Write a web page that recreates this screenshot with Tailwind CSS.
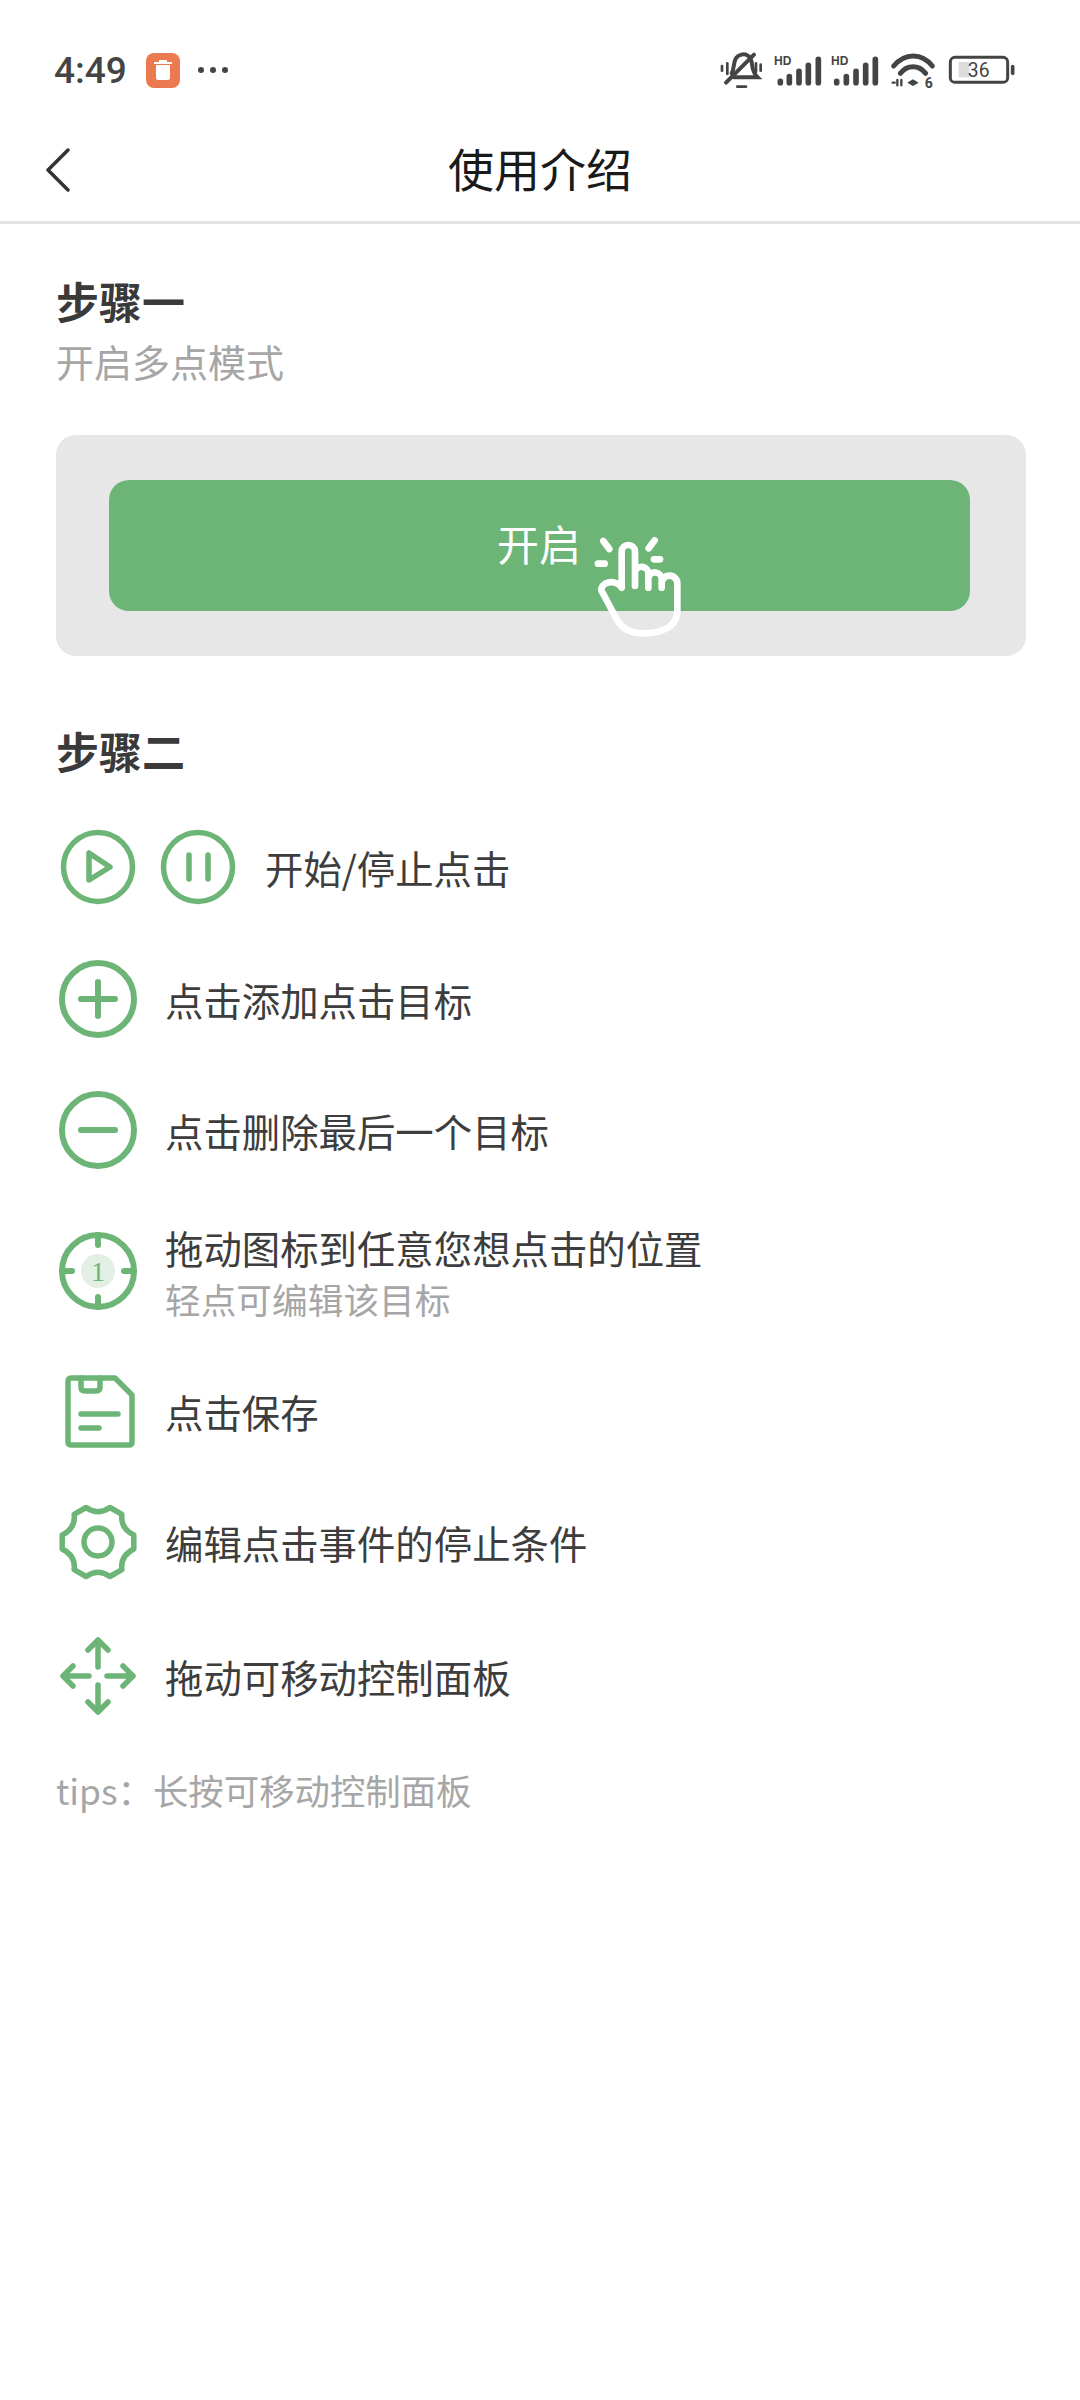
<!DOCTYPE html>
<html lang="zh">
<head>
  <meta charset="UTF-8">
  <meta name="viewport" content="width=device-width, initial-scale=1.0">
  <title>使用介绍</title>
  <script src="https://cdn.jsdelivr.net/npm/@tailwindcss/browser@4"></script>
</head>
<body class="bg-white font-['Noto_Sans_CJK_SC','Noto_Sans',sans-serif]">
  <div class="relative w-[1080px] h-[2400px] overflow-hidden">

    <!-- status bar -->
    <div class="relative h-[112px] pt-[28px] pl-[54px] flex items-center text-[#444]">
      <span class="font-['Roboto',sans-serif] text-[37px] leading-none font-medium">4:49</span>
      <svg class="ml-[19px]" width="34" height="35" viewBox="0 0 34 35">
        <rect width="34" height="35" rx="8" fill="#ec7a50"/>
        <path d="M10 12h14v13a2 2 0 0 1-2 2h-10a2 2 0 0 1-2-2z" fill="#fff"/>
        <rect x="8" y="9" width="18" height="2" fill="#fff"/>
        <rect x="13" y="7" width="8" height="2" fill="#fff"/>
      </svg>
      <div class="ml-[18px] flex gap-[6px]">
        <span class="w-[6px] h-[6px] rounded-full bg-[#444]"></span>
        <span class="w-[6px] h-[6px] rounded-full bg-[#444]"></span>
        <span class="w-[6px] h-[6px] rounded-full bg-[#444]"></span>
      </div>
      <svg class="absolute left-[690px] top-[30px]" width="340" height="80" viewBox="0 0 1020 240" fill="none" stroke="#444" stroke-linecap="round">
        <!-- muted bell -->
        <path d="M125 130c8-12 4-30 12-44 8-13 26-17 38-8 12 8 10 26 14 40 2 10 8 18 14 24h-72" stroke-width="12"/>
        <path d="M108 158 192 74" stroke-width="12"/>
        <path d="M142 170h26" stroke-width="8"/>
        <path d="M96 108v14M112 100v32M198 100v26M212 104v18" stroke-width="8"/>
        <!-- signal 1 -->
        <text x="252" y="106" font-family="Liberation Sans" font-weight="700" font-size="36" fill="#444" stroke="none">HD</text>
        <path d="M271 158v-4M298 158v-18M327 158v-34M355 158v-52M385 158v-70" stroke-width="17"/>
        <!-- signal 2 -->
        <text x="423" y="106" font-family="Liberation Sans" font-weight="700" font-size="36" fill="#444" stroke="none">HD</text>
        <path d="M440 158v-4M469 158v-18M498 158v-34M527 158v-52M556 158v-70" stroke-width="17"/>
        <!-- wifi -->
        <path d="M611 108C645 68 695 68 727 108" stroke-width="15"/>
        <path d="M631 130C652 104 686 104 707 130" stroke-width="15"/>
        <path d="M656 158l13-8 13 8-13 8z" fill="#444" stroke-width="4"/>
        <path d="M608 158h6M622 150v16M634 150v16" stroke-width="7"/>
        <text x="704" y="174" font-family="Roboto" font-weight="700" font-size="42" fill="#444" stroke="none">6</text>
        <!-- battery -->
        <rect x="806" y="96" width="32" height="46" fill="#dcdcdc" stroke="none"/>
        <rect x="781" y="82" width="172" height="75" rx="14" stroke-width="9"/>
        <path d="M968 110v20" stroke-width="11"/>
        <text x="866" y="141" text-anchor="middle" font-family="Roboto" font-size="58" fill="#444" stroke="none">36</text>
      </svg>
    </div>

    <!-- nav -->
    <div class="relative h-[112px] border-b-[3px] border-[#e3e3e3] flex items-center justify-center">
      <svg class="absolute left-[44px] top-[34px]" width="30" height="46" viewBox="0 0 30 46" fill="none" stroke="#333" stroke-width="3.5" stroke-linecap="round" stroke-linejoin="round">
        <path d="M24 4 4 24 24 44"/>
      </svg>
      <h1 class="text-[46px] leading-none text-[#1a1a1a] font-normal">使用介绍</h1>
    </div>

    <!-- step 1 -->
    <div class="px-[56px] pt-[46px]">
      <h2 class="text-[43px] leading-[60px] font-bold text-[#3a3a3a]">步骤一</h2>
      <p class="mt-[6px] text-[38px] leading-[50px] text-[#a6a6a6]">开启多点模式</p>
      <div class="mt-[49px] w-[970px] h-[221px] rounded-[20px] bg-[#e7e7e7] pt-[45px] pl-[53px]">
        <div class="relative w-[861px] h-[131px] rounded-[20px] bg-[#6cb576] flex items-center text-white text-[42px] pl-[388px] pb-[6px]">
          开启
          <svg class="absolute left-[331px] top-[-9px]" width="280" height="190" viewBox="0 0 840 570" fill="none" stroke="#fff" stroke-width="20" stroke-linecap="round" stroke-linejoin="round">
            <path d="M490 210 508 234M474 278H494M644 208 626 232M642 265H660"/>
            <path d="M545 345V242a20 20 0 0 1 40 0V345M585 305a20 20 0 0 1 40 5V350M625 322a20 20 0 0 1 40 5V350M665 335a22 22 0 0 1 47 5V420C712 470 660 487 610 487 570 487 540 470 525 435L485 360C478 335 525 320 545 350"/>
          </svg>
        </div>
      </div>

      <!-- step 2 -->
      <h2 class="mt-[64px] text-[43px] leading-[60px] font-bold text-[#3a3a3a]">步骤二</h2>

      <div class="text-[38.4px] text-[#3d3d3d] leading-[52px]">
        <div class="mt-[42px] h-[90px] flex items-center">
          <svg class="shrink-0" width="184" height="90" viewBox="0 0 184 90" fill="none" stroke="#6cb576" stroke-width="5.5" stroke-linecap="round" stroke-linejoin="round">
            <circle cx="42" cy="45" r="34.5"/>
            <path d="M33 31V58L54 45Z"/>
            <circle cx="142" cy="45" r="34.5"/>
            <path d="M133 33V57M152 33V57"/>
          </svg>
          <span class="ml-[25px]">开始/停止点击</span>
        </div>
        <div class="mt-[42px] h-[90px] flex items-center">
          <svg width="84" height="90" viewBox="0 0 84 90" fill="none" stroke="#6cb576" stroke-width="6" stroke-linecap="round">
            <circle cx="42" cy="45" r="36"/>
            <path d="M42 28V62M25 45H59"/>
          </svg>
          <span class="ml-[25px]">点击添加点击目标</span>
        </div>
        <div class="mt-[41px] h-[90px] flex items-center">
          <svg width="84" height="90" viewBox="0 0 84 90" fill="none" stroke="#6cb576" stroke-width="6" stroke-linecap="round">
            <circle cx="42" cy="45" r="36"/>
            <path d="M25 45H59"/>
          </svg>
          <span class="ml-[25px]">点击删除最后一个目标</span>
        </div>
        <div class="mt-[42px] h-[108px] flex items-center">
          <svg width="84" height="90" viewBox="0 0 84 90" fill="none" stroke="#6cb576" stroke-width="6" stroke-linecap="round">
            <circle cx="42" cy="45" r="17" fill="#e3efe4" stroke="none"/>
            <circle cx="42" cy="45" r="36"/>
            <path d="M42 9V19M42 71V81M6 45H16M68 45H78"/>
            <text x="42" y="55" text-anchor="middle" font-family="Liberation Serif" font-size="28" fill="#6cb576" stroke="none">1</text>
          </svg>
          <div class="ml-[25px]">
            <p class="leading-[56px]">拖动图标到任意您想点击的位置</p>
            <p class="text-[35.7px] leading-[48px] text-[#a6a6a6]">轻点可编辑该目标</p>
          </div>
        </div>
        <div class="mt-[41px] h-[90px] flex items-center">
          <svg width="84" height="90" viewBox="0 0 84 90" fill="none" stroke="#6cb576" stroke-width="5.5" stroke-linecap="round" stroke-linejoin="round">
            <path d="M16 12H59L76 29V76Q76 79 73 79H16Q12 79 12 76V15Q12 12 16 12Z"/>
            <path d="M25 12V21Q25 25 29 25H40Q44 25 44 21V12"/>
            <path d="M25 48H62M25 62H43"/>
          </svg>
          <span class="ml-[25px]">点击保存</span>
        </div>
        <div class="mt-[41px] h-[90px] flex items-center">
          <svg width="84" height="90" viewBox="0 0 84 90" fill="none" stroke="#6cb576" stroke-width="5.5" stroke-linecap="round" stroke-linejoin="round">
            <circle cx="42" cy="45" r="14"/>
            <path d="M77.8 38V52Q64 59 65.9 72.6L53.9 79.5Q42 71 30.1 79.5L18.1 72.6Q20 59 6.2 52V38Q20 31 18.1 17.4L30.1 10.5Q42 19 53.9 10.5L65.9 17.4Q64 31 77.8 38Z"/>
          </svg>
          <span class="ml-[25px]">编辑点击事件的停止条件</span>
        </div>
        <div class="mt-[44px] h-[90px] flex items-center">
          <svg width="84" height="90" viewBox="0 0 84 90" fill="none" stroke="#6cb576" stroke-width="5.5" stroke-linecap="round" stroke-linejoin="round">
            <path d="M42 9V36M32 19 42 9 52 19"/>
            <path d="M42 54V81M32 71 42 81 52 71"/>
            <path d="M7 45H33M17 35 7 45 17 55"/>
            <path d="M51 45H77M67 35 77 45 67 55"/>
          </svg>
          <span class="ml-[25px]">拖动可移动控制面板</span>
        </div>
        <p class="mt-[44px] text-[35.4px] leading-[50px] text-[#a6a6a6]">tips：长按可移动控制面板</p>
      </div>
    </div>
  </div>
</body>
</html>
